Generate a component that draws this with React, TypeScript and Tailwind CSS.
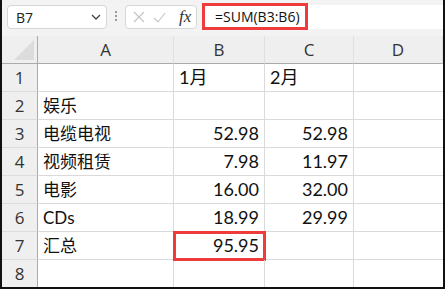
import React from "react";

const cols = ["A", "B", "C", "D"];

const rows: { a: string; b: string; c: string; bAlign?: "left" | "right"; total?: boolean }[] = [
  { a: "", b: "1月", c: "2月", bAlign: "left" },
  { a: "娱乐", b: "", c: "" },
  { a: "电缆电视", b: "52.98", c: "52.98" },
  { a: "视频租赁", b: "7.98", c: "11.97" },
  { a: "电影", b: "16.00", c: "32.00" },
  { a: "CDs", b: "18.99", c: "29.99" },
  { a: "汇总", b: "95.95", c: "", total: true },
  { a: "", b: "", c: "" },
];

const cjk = { fontFamily: "Lato, 'Noto Sans CJK SC', sans-serif" };
const ui = { fontFamily: "'Open Sans', 'Noto Sans', sans-serif" };

function Toolbar() {
  return (
    <div className="-ml-[2px] flex h-[36px] items-start bg-[#f3f3f3] pt-[5px]">
      <div className="ml-[7px] flex h-[24px] w-[100px] items-center justify-between rounded-[4px] border border-[#d6d6d6] bg-white pl-[8px] pr-[5px]">
        <span className="text-[14px] text-[#222]" style={ui}>B7</span>
        <svg width="10" height="6" viewBox="0 0 10 6" fill="none" stroke="#444" strokeWidth="1.3">
          <path d="M1 1l4 4 4-4" />
        </svg>
      </div>
      <div className="mx-[8px] mt-[6px] flex flex-col gap-[2px]">
        <span className="block h-[2px] w-[2px] bg-[#999]" />
        <span className="block h-[2px] w-[2px] bg-[#999]" />
        <span className="block h-[2px] w-[2px] bg-[#999]" />
      </div>
      <div className="flex h-[24px] w-[72px] items-center rounded-[4px] border border-[#d6d6d6] bg-white pl-[7px]">
        <svg width="12" height="12" viewBox="0 0 12 12" stroke="#c4c4c4" strokeWidth="1.1">
          <path d="M1 1l10 10M11 1L1 11" />
        </svg>
        <svg className="ml-[8px]" width="13" height="11" viewBox="0 0 13 11" fill="none" stroke="#c4c4c4" strokeWidth="1.1">
          <path d="M1 6l4 4 7-9" />
        </svg>
        <span className="ml-[13px] text-[17px] italic text-[#333]" style={{ fontFamily: "'Liberation Serif', serif" }}>fx</span>
      </div>
      <div className="ml-[5px] flex h-[24px] flex-1 items-center bg-white">
        <div className="-mt-[1px] flex h-[27px] w-[106px] items-center border-[3px] border-[#ee3b3b] pl-[10px]">
          <span className="text-[14px] text-[#111]" style={ui}>=SUM(B3:B6)</span>
        </div>
      </div>
    </div>
  );
}

function Sheet() {
  return (
    <div className="grid grid-cols-[36px_136px_91px_89px_1fr] auto-rows-[28px]">
      <div className="relative border-b border-r border-[#ababab] bg-[#efefef]">
        <div className="absolute bottom-[3px] right-[3px] h-0 w-0 border-b-[20px] border-l-[20px] border-b-[#dcdcdc] border-l-transparent" />
      </div>
      {cols.map((c) => (
        <div key={c} className="flex items-center justify-center border-b border-r border-b-[#ababab] border-r-[#e0e0e0] bg-[#efefef] text-[17px] text-[#333]" style={ui}>
          {c}
        </div>
      ))}
      {rows.map((r, i) => (
        <React.Fragment key={i}>
          <div className="flex items-center justify-center border-b border-r border-b-[#dcdcdc] border-r-[#ababab] bg-[#efefef] text-[17px] text-[#333]" style={ui}>
            {i + 1}
          </div>
          <div className="flex items-center border-b border-r border-[#dadada] pl-[5px] text-[17px] text-[#111]" style={cjk}>
            {r.a}
          </div>
          <div
            className={
              "relative flex items-center border-b border-r border-[#dadada] text-[18px] text-[#111] " +
              (r.bAlign === "left" ? "justify-start pl-[5px]" : "justify-end pr-[5px]")
            }
            style={cjk}
          >
            {r.total && <div className="absolute -left-[1px] -top-[1px] bottom-[-2px] right-[-2px] border-[3px] border-[#ee3b3b]" />}
            <span className="relative">{r.b}</span>
          </div>
          <div
            className={
              "flex items-center border-b border-r border-[#dadada] text-[18px] text-[#111] " +
              (i === 0 ? "justify-start pl-[5px]" : "justify-end pr-[5px]")
            }
            style={cjk}
          >
            {r.c}
          </div>
          <div className="border-b border-[#dadada]" />
        </React.Fragment>
      ))}
    </div>
  );
}

export default function App() {
  return (
    <div className="h-[289px] w-[445px] overflow-hidden border-x-2 border-b-2 border-[#111] bg-white">
      <Toolbar />
      <Sheet />
    </div>
  );
}
